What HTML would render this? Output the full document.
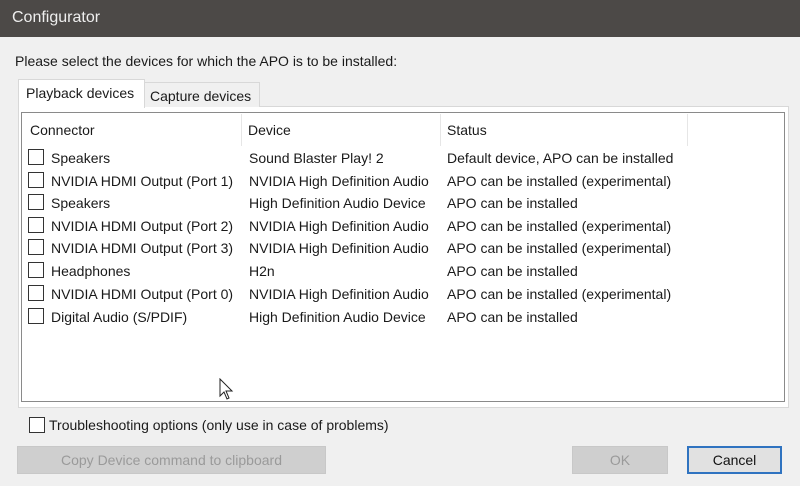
<!DOCTYPE html>
<html><head><style>
body{margin:0;width:800px;height:486px;background:#f0f0f0;font-family:"Liberation Sans",sans-serif;font-size:14px;color:#1a1a1a;position:relative;overflow:hidden}
.a{position:absolute;white-space:nowrap}
.title{left:0;top:0;width:800px;height:37px;background:#4c4947;color:#eee;font-size:16px}
.cb{position:absolute;width:14px;height:14px;border:1px solid #333;background:#fff}
.btn{position:absolute;height:28px;line-height:26px;text-align:center;background:#cfcfcf;color:#9a9a9a;border:1px solid #c8c8c8;box-sizing:border-box}
</style></head><body>
<div class="a title"><span style="position:absolute;left:12px;top:9px">Configurator</span></div>
<div class="a" style="left:15px;top:53px">Please select the devices for which the APO is to be installed:</div>
<div class="a" style="left:18px;top:106px;width:769px;height:300px;border:1px solid #d8d8d8;background:#fff"></div>
<div class="a" style="left:144px;top:82px;width:114px;height:24px;border:1px solid #d8d8d8;border-bottom:none;background:#f0f0f0"><span style="position:absolute;left:5px;top:5px">Capture devices</span></div>
<div class="a" style="left:18px;top:79px;width:125px;height:28px;border:1px solid #d8d8d8;border-bottom:none;background:#fff"><span style="position:absolute;left:7px;top:5px">Playback devices</span></div>
<div class="a" style="left:21px;top:112px;width:762px;height:288px;border:1px solid #8a8a8a;background:#fff"></div>
<div class="a" style="left:241px;top:114px;width:1px;height:32px;background:#e6e6e6"></div>
<div class="a" style="left:440px;top:114px;width:1px;height:32px;background:#e6e6e6"></div>
<div class="a" style="left:687px;top:114px;width:1px;height:32px;background:#e6e6e6"></div>
<div class="a" style="left:30px;top:122px">Connector</div>
<div class="a" style="left:248px;top:122px">Device</div>
<div class="a" style="left:447px;top:122px">Status</div>

<div class="cb" style="left:28px;top:149px"></div><div class="a" style="left:51px;top:150px">Speakers</div><div class="a" style="left:249px;top:150px">Sound Blaster Play! 2</div><div class="a" style="left:447px;top:150px">Default device, APO can be installed</div>
<div class="cb" style="left:28px;top:172px"></div><div class="a" style="left:51px;top:173px">NVIDIA HDMI Output (Port 1)</div><div class="a" style="left:249px;top:173px">NVIDIA High Definition Audio</div><div class="a" style="left:447px;top:173px">APO can be installed (experimental)</div>
<div class="cb" style="left:28px;top:194px"></div><div class="a" style="left:51px;top:195px">Speakers</div><div class="a" style="left:249px;top:195px">High Definition Audio Device</div><div class="a" style="left:447px;top:195px">APO can be installed</div>
<div class="cb" style="left:28px;top:217px"></div><div class="a" style="left:51px;top:218px">NVIDIA HDMI Output (Port 2)</div><div class="a" style="left:249px;top:218px">NVIDIA High Definition Audio</div><div class="a" style="left:447px;top:218px">APO can be installed (experimental)</div>
<div class="cb" style="left:28px;top:239px"></div><div class="a" style="left:51px;top:240px">NVIDIA HDMI Output (Port 3)</div><div class="a" style="left:249px;top:240px">NVIDIA High Definition Audio</div><div class="a" style="left:447px;top:240px">APO can be installed (experimental)</div>
<div class="cb" style="left:28px;top:262px"></div><div class="a" style="left:51px;top:263px">Headphones</div><div class="a" style="left:249px;top:263px">H2n</div><div class="a" style="left:447px;top:263px">APO can be installed</div>
<div class="cb" style="left:28px;top:285px"></div><div class="a" style="left:51px;top:286px">NVIDIA HDMI Output (Port 0)</div><div class="a" style="left:249px;top:286px">NVIDIA High Definition Audio</div><div class="a" style="left:447px;top:286px">APO can be installed (experimental)</div>
<div class="cb" style="left:28px;top:308px"></div><div class="a" style="left:51px;top:309px">Digital Audio (S/PDIF)</div><div class="a" style="left:249px;top:309px">High Definition Audio Device</div><div class="a" style="left:447px;top:309px">APO can be installed</div>

<svg class="a" style="left:219px;top:378px" width="16" height="24" viewBox="0 0 16 24"><path d="M1 1 L1 18 L5 14 L8 21 L10 20 L7 13 L13 13 Z" fill="#fff" stroke="#222" stroke-width="1"/></svg>

<div class="cb" style="left:29px;top:417px"></div><div class="a" style="left:49px;top:417px">Troubleshooting options (only use in case of problems)</div>
<div class="btn" style="left:17px;top:446px;width:309px">Copy Device command to clipboard</div>
<div class="btn" style="left:572px;top:446px;width:96px">OK</div>
<div class="btn" style="left:687px;top:446px;width:95px;background:#e1e1e1;border:2px solid #2f73c0;color:#111;line-height:24px">Cancel</div>
</body></html>
